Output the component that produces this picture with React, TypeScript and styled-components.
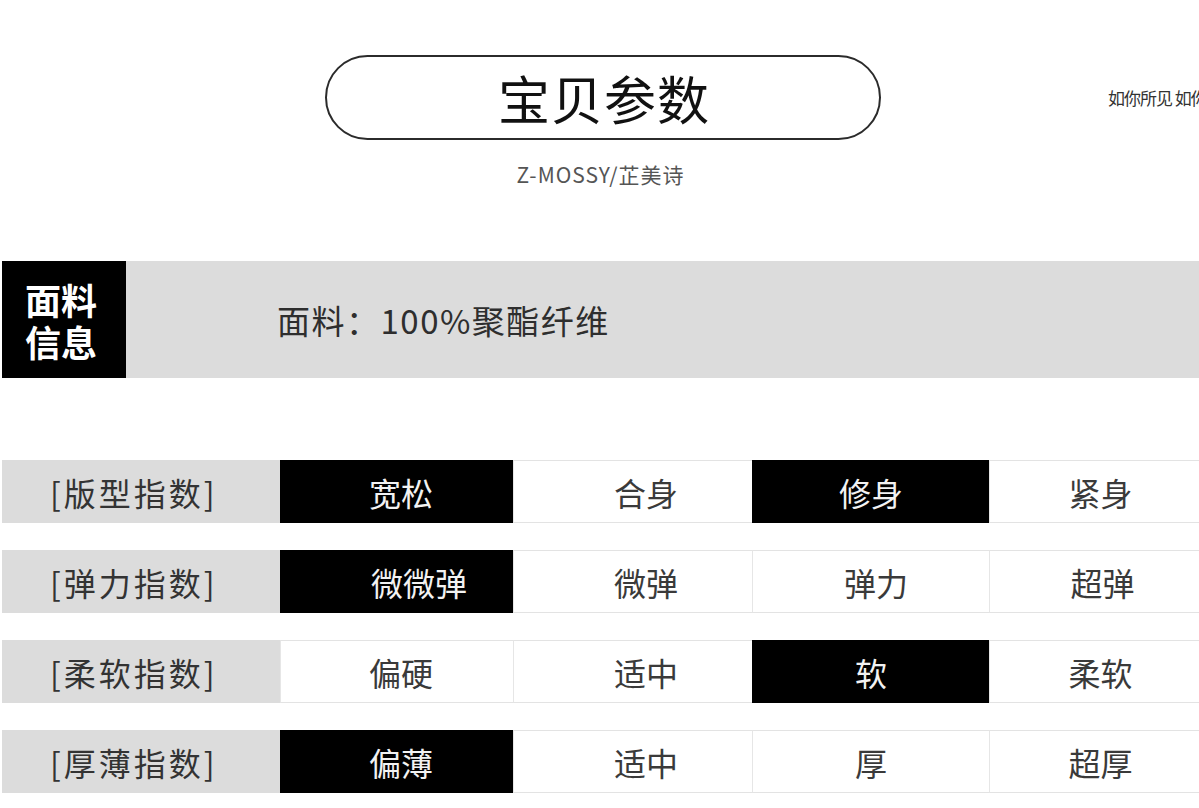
import React from "react";
import styled, { createGlobalStyle } from "styled-components";

const Global = createGlobalStyle`
  html, body { margin: 0; padding: 0; background: #ffffff; }
  body { font-family: "Noto Sans CJK SC", "Noto Sans", sans-serif; overflow: hidden; }
`;

const Page = styled.div`
  width: 1199px;
  height: 808px;
  overflow: hidden;
  display: flex;
  flex-direction: column;
`;

const Header = styled.div`
  display: grid;
  grid-template-columns: 325px 556px 318px;
  align-items: center;
  margin-top: 55px;
`;

const Pill = styled.div`
  grid-column: 2;
  height: 81px;
  border: 2px solid #2b2b2b;
  border-radius: 44px;
  display: flex;
  align-items: center;
  justify-content: center;
  font-size: 52px;
  color: #111;
  letter-spacing: 1px;
  padding-left: 2px;
`;

const SideNote = styled.div`
  grid-column: 3;
  padding-left: 227px;
  white-space: nowrap;
  overflow: hidden;
  font-size: 17px;
  color: #333;
  letter-spacing: -1px;
`;

const Subtitle = styled.div`
  margin-top: 19px;
  text-align: center;
  font-size: 21px;
  letter-spacing: 1px;
  color: #555;
  padding-left: 2px;
`;

const FabricBand = styled.div`
  margin-top: 72px;
  height: 117px;
  display: flex;
  align-items: stretch;
  padding-left: 2px;
`;

const FabricTag = styled.div`
  width: 124px;
  background: #000;
  color: #fff;
  font-weight: 700;
  font-size: 36px;
  line-height: 42px;
  display: flex;
  flex-direction: column;
  justify-content: center;
  padding-left: 23px;
  box-sizing: border-box;
`;

const FabricInfo = styled.div`
  flex: 1;
  background: #dcdcdc;
  display: flex;
  align-items: center;
  padding-left: 151px;
  font-size: 33px;
  letter-spacing: 1.5px;
  color: #2e2e2e;
`;

const Table = styled.div`
  margin-top: 82px;
  display: flex;
  flex-direction: column;
  gap: 27px;
  padding-left: 2px;
`;

const Row = styled.div`
  display: grid;
  grid-template-columns: 278px 233px 239px 237px 222px;
  height: 63px;
`;

const Label = styled.div`
  background: #dcdcdc;
  display: flex;
  align-items: center;
  padding-left: 48px;
  font-size: 32px;
  letter-spacing: 3px;
  color: #333;
`;

const Cell = styled.div<{ $on: boolean; $shift: number }>`
  display: flex;
  align-items: center;
  justify-content: center;
  padding-left: ${(p) => p.$shift}px;
  font-size: 32px;
  background: ${(p) => (p.$on ? "#000" : "#fff")};
  color: ${(p) => (p.$on ? "#f2f2f2" : "#3a3a3a")};
  border-top: 1px solid ${(p) => (p.$on ? "#000" : "#e3e3e3")};
  border-bottom: 1px solid ${(p) => (p.$on ? "#000" : "#e3e3e3")};
  border-left: 1px solid ${(p) => (p.$on ? "#000" : "#e6e6e6")};
`;

const shifts = [8, 26, 0, 0];

const rows: { label: string; cells: string[]; on: number[]; shifts?: number[] }[] = [
  { label: "[版型指数]", cells: ["宽松", "合身", "修身", "紧身"], on: [0, 2] },
  { label: "[弹力指数]", cells: ["微微弹", "微弹", "弹力", "超弹"], on: [0], shifts: [44, 26, 10, 4] },
  { label: "[柔软指数]", cells: ["偏硬", "适中", "软", "柔软"], on: [2] },
  { label: "[厚薄指数]", cells: ["偏薄", "适中", "厚", "超厚"], on: [0] },
];

export default function App() {
  return (
    <>
      <Global />
      <Page>
        <Header>
          <Pill>宝贝参数</Pill>
          <SideNote>如你所见 如你所见</SideNote>
        </Header>
        <Subtitle>Z-MOSSY/芷美诗</Subtitle>
        <FabricBand>
          <FabricTag>
            <span>面料</span>
            <span>信息</span>
          </FabricTag>
          <FabricInfo>面料：100%聚酯纤维</FabricInfo>
        </FabricBand>
        <Table>
          {rows.map((r) => (
            <Row key={r.label}>
              <Label>{r.label}</Label>
              {r.cells.map((c, i) => (
                <Cell key={c + i} $on={r.on.includes(i)} $shift={(r.shifts ?? shifts)[i]}>
                  {c}
                </Cell>
              ))}
            </Row>
          ))}
        </Table>
      </Page>
    </>
  );
}
